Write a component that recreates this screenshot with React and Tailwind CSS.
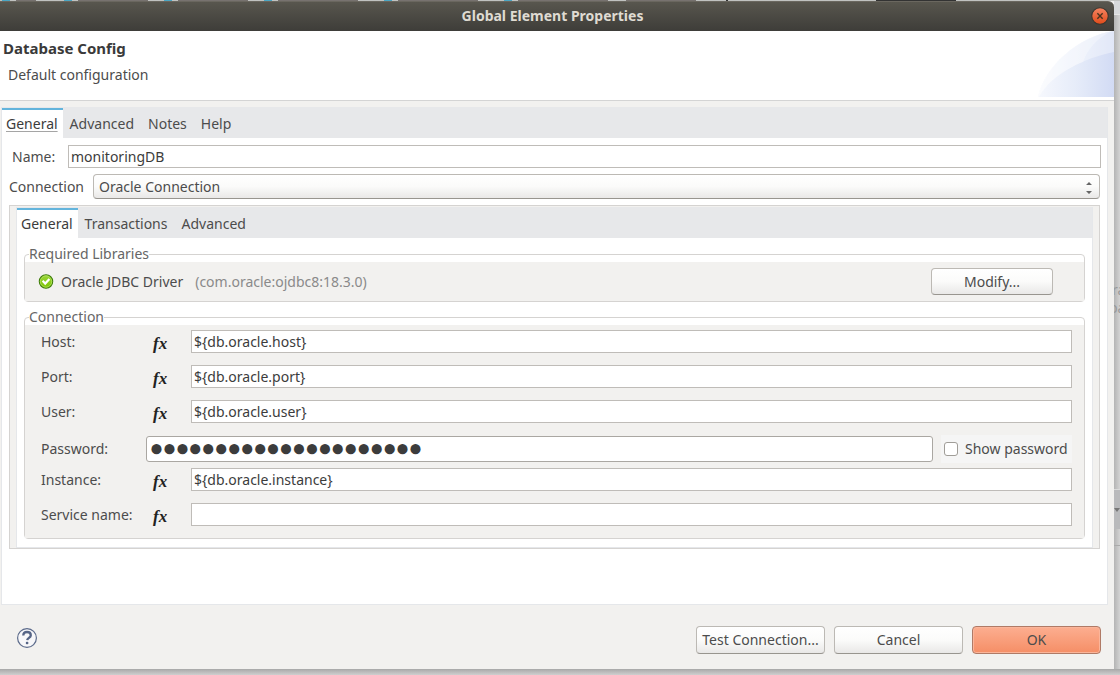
import { useState } from "react";

const TABS = ["General", "Advanced", "Notes", "Help"];
const SUB_TABS = ["General", "Transactions", "Advanced"];

const EDGE_MARKS = [
  ["w-[8px] ml-[2px]", "bg-[#4aa6c4]"],
  ["w-[20px] ml-[6px]", "bg-[#77726f]"],
  ["w-[8px] ml-[28px]", "bg-[#4aa6c4]"],
  ["w-[70px] ml-[6px]", "bg-[#77726f]"],
  ["w-[8px] ml-[16px]", "bg-[#4aa6c4]"],
  ["w-[70px] ml-[6px]", "bg-[#77726f]"],
  ["w-[8px] ml-[16px]", "bg-[#4aa6c4]"],
  ["w-[80px] ml-[6px]", "bg-[#77726f]"],
  ["w-[8px] ml-[26px]", "bg-[#4aa6c4]"],
  ["w-[80px] ml-[6px]", "bg-[#77726f]"],
  ["w-[8px] ml-[26px]", "bg-[#4aa6c4]"],
  ["w-[90px] ml-[6px]", "bg-[#77726f]"],
  ["w-[70px] ml-[18px]", "bg-[#77726f]"],
  ["w-[2px] ml-[30px]", "bg-[#333333]"],
  ["w-[80px] ml-[148px]", "bg-[#333333]"],
];

const buttonLook =
  "rounded border border-[#bcb9b4] border-b-[#98958f] bg-linear-to-b from-white via-[#fbfbfa] to-[#e9e8e7] text-center text-[#4c4c4c]";

function Tabs({ items, label, underline }) {
  return (
    <div role="tablist" aria-label={label} className="flex h-[31px] bg-[#e7e8ea] pt-px">
      {items.map((item, i) => (
        <button
          key={item}
          type="button"
          role="tab"
          aria-selected={i === 0}
          className={
            i === 0
              ? "border-t-2 border-[#63b4dc] bg-white pr-[5px] pb-px pl-1 text-[#3c3c3c]"
              : "px-[7px] pt-px text-[#4c4c4c]"
          }
        >
          <span className={i === 0 && underline ? "underline decoration-[#a5a5a5] decoration-1 underline-offset-2" : ""}>{item}</span>
        </button>
      ))}
    </div>
  );
}

function Fx() {
  return (
    <span className="flex w-[50px] shrink-0 pt-1 pl-3 font-['Liberation_Serif',serif] text-[17px] leading-5 font-bold text-[#222] italic">
      fx
    </span>
  );
}

function Field({ id, label, value }) {
  return (
    <div className="flex h-[23px] items-center">
      <label htmlFor={id} className="w-[100px] shrink-0">{label}</label>
      <Fx />
      <input
        id={id}
        type="text"
        defaultValue={value}
        className="h-[23px] min-w-0 flex-1 border border-[#bfbcb8] bg-white px-[2px] text-[#3c3c3c] outline-none"
      />
    </div>
  );
}

function Password() {
  const [shown, setShown] = useState(false);
  return (
    <div className="-my-px flex h-7 items-center">
      <label htmlFor="password" className="w-[105px] shrink-0">Password:</label>
      <input
        id="password"
        type={shown ? "text" : "password"}
        defaultValue="${db.oracle.password}"
        className={`h-[26px] min-w-0 flex-1 rounded-[3px] border border-[#aaa7a2] bg-white px-[3px] text-[#3c3c3c] outline-none ${
          shown ? "" : "font-['Liberation_Serif',serif] text-[37px] leading-6 font-bold"
        }`}
      />
      <label className="ml-2 flex h-7 w-[131px] shrink-0 items-center gap-[7px] bg-[#f5f5f5] pl-[3px]">
        <input
          type="checkbox"
          checked={shown}
          onChange={() => setShown(!shown)}
          className="size-[14px] appearance-none rounded-[3px] border border-[#a09d98] bg-white checked:bg-[#f5936b]"
        />
        <span className="whitespace-nowrap">Show password</span>
      </label>
    </div>
  );
}

function Group({ title, children }) {
  return (
    <fieldset className="min-w-0 rounded border border-[#d5d3d1]">
      <legend className="ml-1 h-4 leading-4 text-[#666]">{title}</legend>
      {children}
    </fieldset>
  );
}

function TitleBar() {
  return (
    <header className="flex h-[30px] shrink-0 items-center rounded-tr-md border-t border-[#6a675f] bg-linear-to-b from-[#58564e] to-[#3e3d39] pr-[5px] pb-px">
      <h1 className="flex-1 pl-[14px] text-center font-bold text-[#dfdbd2]">Global Element Properties</h1>
      <button type="button" aria-label="Close" className="size-[18px]">
        <svg viewBox="0 0 17 17" className="size-[18px]">
          <defs>
            <linearGradient id="close" x1="0" y1="0" x2="0" y2="1">
              <stop offset="0" stopColor="#f58462" />
              <stop offset="1" stopColor="#df4b1a" />
            </linearGradient>
          </defs>
          <circle cx="8.5" cy="8.5" r="7.8" fill="url(#close)" stroke="#37352f" strokeWidth="1" />
          <path d="M6 6l5 5M11 6l-5 5" stroke="#47331f" strokeWidth="1.3" />
        </svg>
      </button>
    </header>
  );
}

function Banner() {
  return (
    <section className="flex h-[70px] shrink-0 justify-between border-b border-[#d4d4d4] bg-white">
      <div className="pt-[7px]">
        <h2 className="pl-[3px] text-[15px] leading-5 font-bold text-[#3a3a3a]">Database Config</h2>
        <p className="pt-[7px] pl-2 leading-5">Default configuration</p>
      </div>
      <svg viewBox="0 0 76 66" className="h-[66px] w-[76px]" aria-hidden="true">
        <defs>
          <linearGradient id="swoosh" x1="0" x2="1">
            <stop offset="0" stopColor="#f6f8fd" />
            <stop offset="0.5" stopColor="#e6ecf9" />
            <stop offset="1" stopColor="#d2dbf4" />
          </linearGradient>
        </defs>
        <path d="M0 66C6 36 40 5 76 0V66Z" fill="url(#swoosh)" />
        <path d="M0 66C6 36 40 5 76 0V21C46 27 14 43 1 66Z" fill="#fff" opacity="0.35" />
        <path d="M0 66C6 36 40 5 72 1C60 7 50 17 45 31C27 38 9 50 1 66Z" fill="#fff" opacity="0.3" />
      </svg>
    </section>
  );
}

function Backdrop() {
  return (
    <aside aria-hidden="true" className="flex w-[6px] shrink-0 flex-col overflow-hidden bg-linear-to-r from-[#b4b4b4] to-[#d3d3d3] text-sm text-[#999]">
      <div className="h-[14px] shrink-0 border-b border-[#e6e6e6] bg-[#d8dadc]" />
      <div className="h-[267px] shrink-0" />
      <span className="-ml-[2px] h-4 leading-4">ra</span>
      <span className="mt-[2px] -ml-[5px] h-4 leading-4">pa</span>
      <div className="mt-[173px] flex h-10 shrink-0 items-center border-t border-[#dadada] bg-[#b9babc]">
        <svg viewBox="0 0 6 6" className="size-[6px]"><path d="M0 1h6L3 5Z" fill="#777" /></svg>
      </div>
      <div className="h-[17px] shrink-0 border-b border-[#aaa]" />
    </aside>
  );
}

export default function App() {
  return (
    <div className="flex min-h-screen flex-col bg-[#b9b9b9] font-['Noto_Sans','Open_Sans',sans-serif] text-sm text-[#4c4c4c]">
      <div aria-hidden="true" className="flex h-px shrink-0 overflow-hidden bg-[#c0c2c0]">
        {EDGE_MARKS.map(([size, color], i) => (
          <span key={i} className={`h-px shrink-0 ${size} ${color}`} />
        ))}
      </div>
      <div className="flex flex-1">
        <main className="flex min-w-0 flex-1 flex-col bg-[#f2f1ef]">
          <TitleBar />
          <Banner />

          <section className="mt-[6px] mr-[6px] ml-px flex flex-1 flex-col border-r border-b border-l border-[#e5e7ea] bg-white">
            <Tabs items={TABS} label="Element" underline />

            <div className="mt-[7px] mr-[6px] flex items-center">
              <label htmlFor="name" className="w-[66px] shrink-0 pl-[10px]">Name:</label>
              <input
                id="name"
                type="text"
                defaultValue="monitoringDB"
                className="h-[23px] min-w-0 flex-1 border border-[#bfbcb8] bg-white px-[2px] text-[#3c3c3c] outline-none"
              />
            </div>

            <div className="mt-[6px] mr-[7px] flex items-center">
              <label htmlFor="connection" className="w-[91px] shrink-0 pl-[7px]">Connection</label>
              <div className="relative min-w-0 flex-1">
                <select id="connection" className={`block h-[25px] w-full appearance-none pl-[5px] text-left outline-none ${buttonLook}`}>
                  <option>Oracle Connection</option>
                </select>
                <svg viewBox="0 0 8 14" className="pointer-events-none absolute top-[7px] right-[7px] h-[14px] w-2" aria-hidden="true">
                  <path d="M1 4L4 1L7 4ZM1 10L4 13L7 10Z" fill="#666" />
                </svg>
              </div>
            </div>

            <div className="mt-[6px] mr-[7px] ml-[7px] border border-[#d5d3d1] bg-[#f2f1ef] px-[6px] pt-px">
              <div className="border-r border-b border-l border-[#e5e7ea] bg-white">
                <Tabs items={SUB_TABS} label="Connection" />
                <div className="flex flex-col gap-[7px] px-[7px] pt-2 pb-2">
                  <Group title="Required Libraries">
                    <div className="flex h-[39px] items-center bg-[#f2f1ef] pr-[31px] pl-[13px]">
                      <svg viewBox="0 0 16 16" className="size-4 shrink-0" aria-hidden="true">
                        <defs>
                          <linearGradient id="ok" x1="0" y1="0" x2="0" y2="1">
                            <stop offset="0" stopColor="#9ad63a" />
                            <stop offset="1" stopColor="#7cc400" />
                          </linearGradient>
                        </defs>
                        <circle cx="8" cy="7.5" r="6.7" fill="url(#ok)" stroke="#3f7d0c" strokeWidth="1.1" />
                        <circle cx="8" cy="7.5" r="5.7" fill="none" stroke="#b9e56b" strokeWidth="0.7" />
                        <path d="M4.6 6.8L7.2 9.6L11.4 5" fill="none" stroke="#fff" strokeWidth="2.2" />
                      </svg>
                      <span className="pl-[7px] whitespace-nowrap">Oracle JDBC Driver</span>
                      <span className="pl-3 whitespace-nowrap text-[#8a8a8a]">(com.oracle:ojdbc8:18.3.0)</span>
                      <button type="button" className={`ml-auto h-[27px] w-[122px] ${buttonLook}`}>Modify...</button>
                    </div>
                  </Group>

                  <Group title="Connection">
                    <div className="flex flex-col bg-[#f2f1ef] pt-[5px] pr-3 pb-3 pl-4">
                      <div className="flex flex-col gap-3 pb-[13px]">
                        <Field id="host" label="Host:" value="${db.oracle.host}" />
                        <Field id="port" label="Port:" value="${db.oracle.port}" />
                        <Field id="user" label="User:" value="${db.oracle.user}" />
                      </div>
                      <Password />
                      <div className="flex flex-col gap-3 pt-[6px]">
                        <Field id="instance" label="Instance:" value="${db.oracle.instance}" />
                        <Field id="service" label="Service name:" value="" />
                      </div>
                    </div>
                  </Group>
                </div>
              </div>
            </div>
          </section>

          <footer className="flex h-16 shrink-0 items-center gap-[9px] pt-[5px] pr-[13px] pl-4">
            <button type="button" aria-label="Help" className="mr-auto -mt-1 size-[22px]">
              <svg viewBox="0 0 22 22" className="size-[22px]">
                <circle cx="11" cy="11" r="9.4" fill="#f7f7f9" stroke="#5c6b8b" strokeWidth="1.2" />
                <path d="M7.3 8.6C7.3 6.2 8.9 5 11 5S14.8 6.2 14.8 8.2C14.8 10.8 11.5 10.9 11.2 13.2" fill="none" stroke="#566586" strokeWidth="2.3" />
                <rect x="9.8" y="14.8" width="2.6" height="2.4" rx="1" fill="#566586" />
              </svg>
            </button>
            <button type="button" className={`h-7 w-[129px] whitespace-nowrap ${buttonLook}`}>Test Connection...</button>
            <button type="button" className={`h-7 w-[129px] ${buttonLook}`}>Cancel</button>
            <button type="button" className="h-7 w-[129px] rounded border border-[#b07a66] bg-linear-to-b from-[#fcae90] to-[#f58e66] text-[#4c4c4c] inset-ring inset-ring-[#fbb59a]">OK</button>
          </footer>
        </main>
        <Backdrop />
      </div>
      <div className="h-[6px] shrink-0 bg-linear-to-b from-[#a8a8a8] to-[#cfcfcf]" />
    </div>
  );
}
